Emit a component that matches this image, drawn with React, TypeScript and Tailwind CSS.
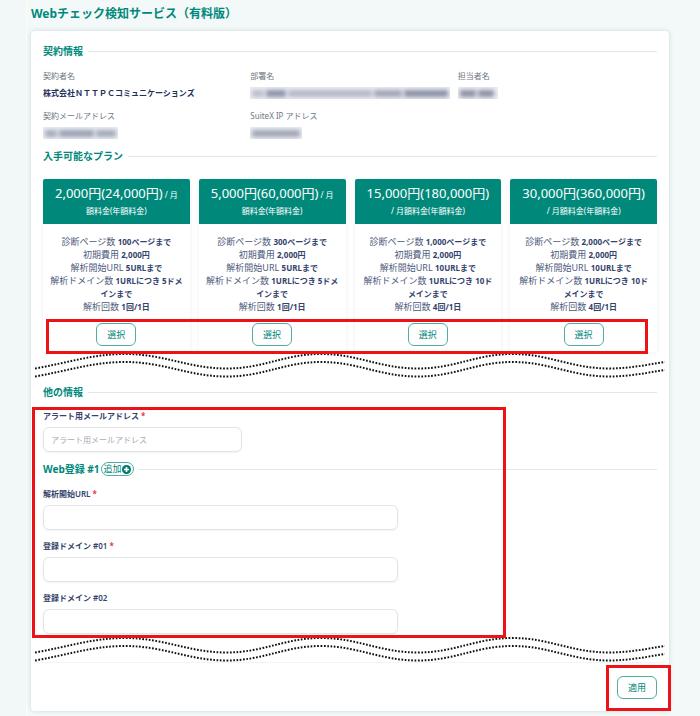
import React from 'react';

interface Plan {
    price: string;
    note: [string, string];
    features: [string, string][];
}

const makeFeatures = (pages: string, urls: string, domains: string, runs: string): [string, string][] => [
    ['診断ページ数', `${pages}ページまで`],
    ['初期費用', '2,000円'],
    ['解析開始URL', `${urls}URLまで`],
    ['解析ドメイン数', `1URLにつき ${domains}ドメインまで`],
    ['解析回数', `${runs}回/1日`],
];

const plans: Plan[] = [
    { price: '2,000円(24,000円)', note: ['/ 月', '額料金(年額料金)'], features: makeFeatures('100', '5', '5', '1') },
    { price: '5,000円(60,000円)', note: ['/ 月', '額料金(年額料金)'], features: makeFeatures('300', '5', '5', '1') },
    { price: '15,000円(180,000円)', note: ['', '/ 月額料金(年額料金)'], features: makeFeatures('1,000', '10', '10', '4') },
    { price: '30,000円(360,000円)', note: ['', '/ 月額料金(年額料金)'], features: makeFeatures('2,000', '10', '10', '4') },
];

const SectionTitle: React.FC<{ children: React.ReactNode }> = ({ children }) => (
    <div className="flex items-center gap-[5px]">
        <h2 className="flex items-center gap-px whitespace-nowrap text-[10px] leading-4 font-bold text-[#00897b]">{children}</h2>
        <div className="flex-1 h-px bg-[#e4e6e8]" />
    </div>
);

const Highlight: React.FC<{ className: string }> = ({ className }) => (
    <div className={`absolute pointer-events-none border-[3px] border-[#ed1118] ${className}`} />
);

const Masked: React.FC<{ className: string; parts: string[] }> = ({ className, parts }) => (
    <div className={`flex items-center gap-[2px] h-3 px-[2px] bg-[#eceef2] overflow-hidden ${className}`}>
        {parts.map((part, i) => (
            <span key={i} className={`h-[7px] blur-[2px] ${part}`} />
        ))}
    </div>
);

const InfoItem: React.FC<{ label: string; children: React.ReactNode }> = ({ label, children }) => (
    <div>
        <dt className="text-[8px] leading-3 text-[#6f7782]">{label}</dt>
        <dd className="mt-[5px] text-[8px] leading-3 font-bold text-[#1f2f5c]">{children}</dd>
    </div>
);

const Wave: React.FC = () => (
    <svg className="block w-full h-[26px]" viewBox="0 0 632 26" preserveAspectRatio="none" fill="none" stroke="#111" strokeWidth="2" strokeDasharray="1.7 1.6">
        <path d="M0 16.500C32 11 58 2 90 2C130 2 154 16.500 192 16.500S250 2 287 2S346 16.500 384 16.500S442 2 479 2S538 16.500 576 16.500C596 16.500 612 13 632 10" />
        <path d="M0 24.500C32 19 58 10 90 10C130 10 154 24.500 192 24.500S250 10 287 10S346 24.500 384 24.500S442 10 479 10S538 24.500 576 24.500C596 24.500 612 21 632 18" />
    </svg>
);

interface FieldProps {
    id: string;
    label: string;
    required?: boolean;
    placeholder?: string;
    short?: boolean;
}

const Field: React.FC<FieldProps> = ({ id, label, required, placeholder, short }) => (
    <div className="grid grid-cols-12 gap-x-2">
        <label htmlFor={id} className="col-span-12 text-[8px] leading-3 font-semibold text-[#33436b]">
            {label}
            {required && <span className="ml-[2px] text-[#e5233d]">*</span>}
        </label>
        <input
            id={id}
            type="text"
            placeholder={placeholder}
            className={`mt-[5px] h-[25px] w-full px-[7px] text-[8px] text-[#33436b] bg-white border border-[#e2e4e8] rounded-md shadow-xs placeholder:text-[#a5acb8] focus:outline-none focus:border-[#00897b] ${short ? 'col-span-4' : 'col-span-7'}`}
        />
    </div>
);

const outlineButton = 'w-10 h-[23px] text-[9px] leading-none text-[#00897b] bg-white border border-[#4fada2] rounded-md hover:bg-[#e6f4f2]';

export default function App() {
    return (
        <div className="min-h-screen flex bg-[#f3f8f8] font-['Noto_Sans','Noto_Sans_CJK_JP',sans-serif]">
            <div className="w-[27px] shrink-0 bg-[#f2f8f8] border-r border-[#f9fcfc]" />
            <main className="flex-1 min-w-0 pl-1 pr-[31px] pb-1">
                <h1 className="h-[31px] pt-1 text-[12px] leading-5 font-bold text-[#00897b]">Webチェック検知サービス（有料版）</h1>

                <div className="px-3 py-3 bg-white rounded-sm shadow-[0_0_4px_rgba(60,110,110,0.22)]">
                    <SectionTitle>契約情報</SectionTitle>
                    <dl className="mt-[11px] grid grid-cols-3 gap-x-2 gap-y-[11px]">
                        <InfoItem label="契約者名">株式会社ＮＴＴＰＣコミュニケーションズ</InfoItem>
                        <InfoItem label="部署名">
                            <Masked className="w-full" parts={['w-3 bg-[#b9bdca]', 'w-5 bg-[#8c92a8]', 'flex-1 bg-[#b4b8c7]', 'w-7 bg-[#a0a4b7]', 'w-11 bg-[#8b90a6]']} />
                        </InfoItem>
                        <InfoItem label="担当者名">
                            <Masked className="w-10" parts={['w-4 bg-[#8b90a6]', 'w-4 bg-[#8b90a6]']} />
                        </InfoItem>
                        <InfoItem label="契約メールアドレス">
                            <Masked className="w-[75px]" parts={['w-3 bg-[#a4a9ba]', 'w-9 bg-[#9ba0b4]', 'w-5 bg-[#a4a9ba]']} />
                        </InfoItem>
                        <InfoItem label="SuiteX IP アドレス">
                            <Masked className="w-[52px]" parts={['w-12 bg-[#a0a5b7]']} />
                        </InfoItem>
                    </dl>

                    <div className="mt-[9px]">
                        <SectionTitle>入手可能なプラン</SectionTitle>
                    </div>
                    <div className="relative mt-[15px]">
                        <div className="grid grid-cols-4 gap-[9px]">
                            {plans.map(plan => (
                                <section key={plan.price} className="flex flex-col items-center pb-[6px] text-center rounded-xs shadow-[0_0_5px_rgba(0,0,0,0.07)]">
                                    <h3 className="w-full pt-[6px] pb-[5px] text-white bg-[#00897b] rounded-t-xs">
                                        <span className="flex items-baseline justify-center gap-[2px] h-[17px] text-[13px] leading-[17px] whitespace-nowrap">
                                            {plan.price}
                                            {plan.note[0] && <small className="text-[8px]">{plan.note[0]}</small>}
                                        </span>
                                        <small className="block text-[8px] leading-[17px]">{plan.note[1]}</small>
                                    </h3>
                                    <ul className="px-[6px] pt-[11px] text-[9px] leading-[13px] text-[#4d5a7d]">
                                        {plan.features.map(([name, value]) => (
                                            <li key={name}>
                                                {name} <strong className="text-[8px] font-bold text-[#33436b]">{value}</strong>
                                            </li>
                                        ))}
                                    </ul>
                                    <button type="button" className={`mt-[10px] ${outlineButton}`}>選択</button>
                                </section>
                            ))}
                        </div>
                        <Highlight className="left-[3px] right-[9px] -bottom-[2px] h-[35px]" />
                    </div>

                    <div className="-mx-2">
                        <Wave />
                    </div>

                    <div className="mt-[6px]">
                        <SectionTitle>他の情報</SectionTitle>
                    </div>
                    <form className="relative mt-[10px]">
                        <Field id="alert-mail" label="アラート用メールアドレス" placeholder="アラート用メールアドレス" required short />
                        <div className="mt-[9px] mb-[11px]">
                            <SectionTitle>
                                Web登録 #1
                                <button type="button" className="flex items-center h-[14px] px-[2px] text-[9px] font-normal border border-[#4fada2] rounded-full">
                                    追加
                                    <svg className="w-[9px] h-[9px]" viewBox="0 0 16 16" fill="none">
                                        <circle cx="8" cy="8" r="8" fill="#00796b" />
                                        <path d="M8 3.500v9M3.500 8h9" stroke="#fff" strokeWidth="3" />
                                    </svg>
                                </button>
                            </SectionTitle>
                        </div>
                        <div className="flex flex-col gap-[10px]">
                            <Field id="start-url" label="解析開始URL" required />
                            <Field id="domain-01" label="登録ドメイン #01" required />
                            <Field id="domain-02" label="登録ドメイン #02" />
                        </div>
                        <Highlight className="-left-[11px] right-[151px] -top-[3px] -bottom-1" />
                    </form>

                    <div className="-mx-2 mt-[2px] border-b border-[#f3f4f5]">
                        <Wave />
                    </div>

                    <div className="flex justify-end mt-[13px]">
                        <div className="relative">
                            <button type="button" className={`block ${outlineButton}`}>適用</button>
                            <Highlight className="-left-[11px] -right-[14px] -top-[11px] -bottom-[12px]" />
                        </div>
                    </div>
                </div>
            </main>
        </div>
    );
}
